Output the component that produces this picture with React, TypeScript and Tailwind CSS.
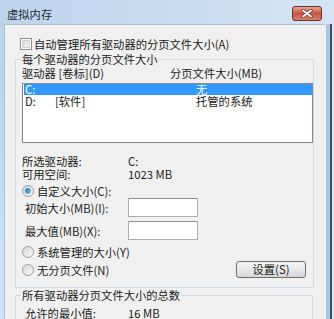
import React from "react";

const Checkbox = () => (
  <span className="w-[12px] h-[12px] shrink-0 border border-[#8e8f8f] bg-white p-[1px] flex">
    <span className="flex-1 border border-[#d0d0d0] bg-gradient-to-br from-[#dadada] to-[#f7f7f7]" />
  </span>
);

const Radio = ({ checked }: { checked?: boolean }) => (
  <span className="w-[12px] h-[12px] shrink-0 rounded-full border border-[#a0a0a0] bg-gradient-to-br from-[#d6d6d6] to-[#fbfbfb] flex items-center justify-center">
    {checked && (
      <span className="w-[6px] h-[6px] rounded-full bg-gradient-to-br from-[#1d6db5] to-[#86c8f4]" />
    )}
  </span>
);

const CloseButton = () => (
  <button className="ml-auto mt-[6px] mr-[12px] w-[30px] h-[15px] rounded-[3px] border border-[#6b3229] bg-gradient-to-b from-[#e8a697] via-[#c9523f] to-[#d9806b] flex items-center justify-center">
    <svg width="12" height="9" viewBox="0 0 12 9">
      <path d="M2 1.5 L10 7.5 M10 1.5 L2 7.5" stroke="#6a2a20" strokeWidth="3.4" strokeLinecap="round" />
      <path d="M2 1.5 L10 7.5 M10 1.5 L2 7.5" stroke="#ffffff" strokeWidth="2" strokeLinecap="round" />
    </svg>
  </button>
);

const drives = [
  { letter: "C:", label: "", size: "无", selected: true },
  { letter: "D:", label: "[软件]", size: "托管的系统", selected: false },
];

const TextInput = () => (
  <div className="w-[70px] h-[19px] border border-[#abadb3] border-t-[#8e9096] bg-white" />
);

export default function App() {
  return (
    <div className="w-[334px] h-[319px] overflow-hidden flex flex-col bg-gradient-to-b from-[#b9d1ea] to-[#d2e2f3] text-[#1b1b1b] text-[11.3px] leading-[14px] font-['Noto_Sans_CJK_SC','Noto_Sans',sans-serif]">
      {/* Title bar */}
      <div className="h-[24px] shrink-0 flex items-start bg-gradient-to-r from-[#bed4ec] to-[#d4e4f4]">
        <span className="mt-[7px] ml-[7px] text-[#1e2a36]">虚拟内存</span>
        <CloseButton />
      </div>

      <div className="flex flex-1 min-h-0">
        <div className="w-[4px] shrink-0" />

        {/* Dialog body */}
        <div className="flex-1 min-w-0 bg-[#f0f0f0] border-l border-t border-[#aebfd2] flex flex-col">
          <div className="mt-[12px] ml-[15px] h-[14px] flex items-center gap-[2px]">
            <Checkbox />
            <span>自动管理所有驱动器的分页文件大小(A)</span>
          </div>

          {/* Per-drive group */}
          <fieldset className="mt-[1px] ml-[10px] w-[299px] border border-[#d3dbe1] pb-[9px]">
            <legend className="ml-[5px] px-[1px] leading-[14px]">每个驱动器的分页文件大小</legend>

            <div className="h-[14px] pl-[6px] flex">
              <span className="w-[148px]">驱动器 [卷标](D)</span>
              <span>分页文件大小(MB)</span>
            </div>

            <div className="mt-[3px] ml-[6px] h-[60px] border border-[#828790] bg-white pl-[1px] flex flex-col">
              {drives.map((d) => (
                <div
                  key={d.letter}
                  className={
                    d.selected
                      ? "h-[11px] leading-[11px] flex bg-[#3399ff] text-white"
                      : "h-[12px] leading-[12px] flex"
                  }
                >
                  <span className="w-[172px] pl-[1px] flex">
                    <span className="w-[30px]">{d.letter}</span>
                    <span>{d.label}</span>
                  </span>
                  <span>{d.size}</span>
                </div>
              ))}
            </div>

            <div className="mt-[12px] pl-[6px] h-[13px] leading-[13px] flex">
              <span className="w-[106px]">所选驱动器:</span>
              <span>C:</span>
            </div>
            <div className="pl-[6px] h-[13px] leading-[13px] flex">
              <span className="w-[106px]">可用空间:</span>
              <span>1023 MB</span>
            </div>

            <div className="mt-[3px] pl-[6px] h-[14px] flex items-center gap-[3px]">
              <Radio checked />
              <span>自定义大小(C):</span>
            </div>

            <div className="pl-[9px] h-[19px] flex items-center">
              <span className="w-[103px] mt-[1px]">初始大小(MB)(I):</span>
              <TextInput />
            </div>
            <div className="mt-[4px] pl-[9px] h-[19px] flex items-center">
              <span className="w-[103px] mt-[1px]">最大值(MB)(X):</span>
              <TextInput />
            </div>

            <div className="mt-[5px] pl-[6px] h-[14px] flex items-center gap-[3px]">
              <Radio />
              <span>系统管理的大小(Y)</span>
            </div>

            <div className="mt-[2px] pl-[6px] pr-[7px] h-[17px] flex items-center gap-[3px]">
              <Radio />
              <span>无分页文件(N)</span>
              <button className="ml-auto w-[70px] h-[17px] rounded-[3px] border border-[#707070] bg-gradient-to-b from-[#f3f3f3] via-[#e8e8e8] to-[#d6d6d6] leading-[15px] text-[#1b1b1b]">
                设置(S)
              </button>
            </div>
          </fieldset>

          {/* Totals group */}
          <fieldset className="ml-[10px] w-[298px] border border-[#d3dbe1] pb-[10px]">
            <legend className="ml-[5px] px-[1px] leading-[14px]">所有驱动器分页文件大小的总数</legend>
            <div className="mt-[4px] pl-[9px] h-[14px] flex">
              <span className="w-[103px]">允许的最小值:</span>
              <span>16 MB</span>
            </div>
          </fieldset>
        </div>

        {/* Right frame */}
        <div className="w-[9px] shrink-0 flex">
          <div className="w-[1px] bg-[#e9f1f9]" />
          <div className="w-[4px] bg-[#a9c6e4]" />
          <div className="w-[2px] bg-[#3e4c5d]" />
          <div className="w-[2px] bg-[#dbe7f3]" />
        </div>
      </div>
    </div>
  );
}
